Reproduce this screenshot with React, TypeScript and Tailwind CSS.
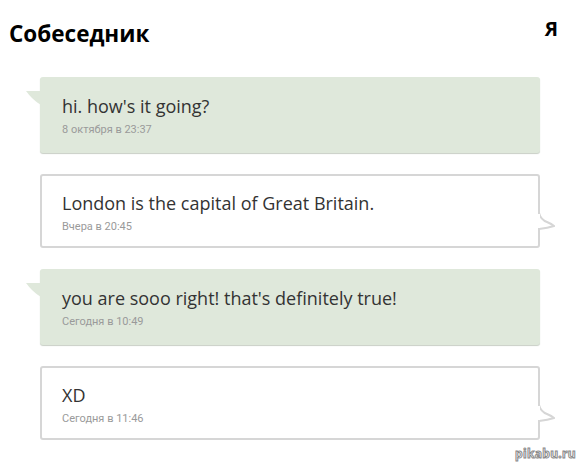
import React from 'react';

type Msg = { text: string; time: string; mine: boolean };

const messages: Msg[] = [
    { text: "hi. how's it going?", time: '8 октября в 23:37', mine: false },
    { text: 'London is the capital of Great Britain.', time: 'Вчера в 20:45', mine: true },
    { text: "you are sooo right! that's definitely true!", time: 'Сегодня в 10:49', mine: false },
    { text: 'XD', time: 'Сегодня в 11:46', mine: true },
];

function Bubble({ msg }: { msg: Msg }) {
    if (!msg.mine) {
        return (
            <div className="relative h-[76px] rounded-[3px] bg-[#dfe8db] shadow-[0_1px_1px_#c9cfc6] pl-[22px] pt-[17px]">
                {/* tail on the left */}
                <svg className="absolute left-[-14px] top-[13px]" width="15" height="16" viewBox="0 0 15 16">
                    <path d="M15 1 L0 1 Q3 5 6 8 Q10 12 15 15 Z" fill="#dfe8db" />
                </svg>
                <div className="text-[18px] leading-[24px] text-[#333]">{msg.text}</div>
                <div className="mt-[5px] font-['Roboto',sans-serif] text-[11px] leading-[14px] text-[#9a9a9a]">{msg.time}</div>
            </div>
        );
    }
    return (
        <div className="relative h-[74px] rounded-[3px] border-2 border-[#d6d6d6] bg-white pl-[20px] pt-[15px]">
            {/* tail on the right */}
            <svg className="absolute right-[-17px] top-[36px]" width="17" height="20" viewBox="0 0 17 20">
                <path d="M1 1 Q3 8 9 10 Q14 12 16 14 Q10 16 1 17" fill="white" stroke="#d6d6d6" strokeWidth="2" />
                <rect x="0" y="2" width="2" height="14" fill="white" />
            </svg>
            <div className="text-[18px] leading-[24px] text-[#333]">{msg.text}</div>
            <div className="mt-[5px] font-['Roboto',sans-serif] text-[11px] leading-[14px] text-[#9a9a9a]">{msg.time}</div>
        </div>
    );
}

export default function App() {
    return (
        <div className="relative w-[584px] h-[465px] bg-white font-['Open_Sans',sans-serif] overflow-hidden">
            {/* Header */}
            <div className="flex justify-between items-start pl-[9px] pr-[26px] pt-[18px]">
                <h1 className="text-[22.5px] leading-[32px] font-bold text-black">Собеседник</h1>
                <span className="text-[20px] leading-[24px] font-bold text-black mt-[-1px]">Я</span>
            </div>

            {/* Messages */}
            <div className="ml-[40px] w-[500px] mt-[27px] flex flex-col gap-[21px]">
                {messages.map((m, i) => (
                    <Bubble key={i} msg={m} />
                ))}
            </div>

            <div className="absolute right-[8px] bottom-[5px] text-[12px] font-bold leading-[12px] text-white [-webkit-text-stroke:1px_#8a8a8a] tracking-[0.3px]">
                pikabu.ru
            </div>
        </div>
    );
}
